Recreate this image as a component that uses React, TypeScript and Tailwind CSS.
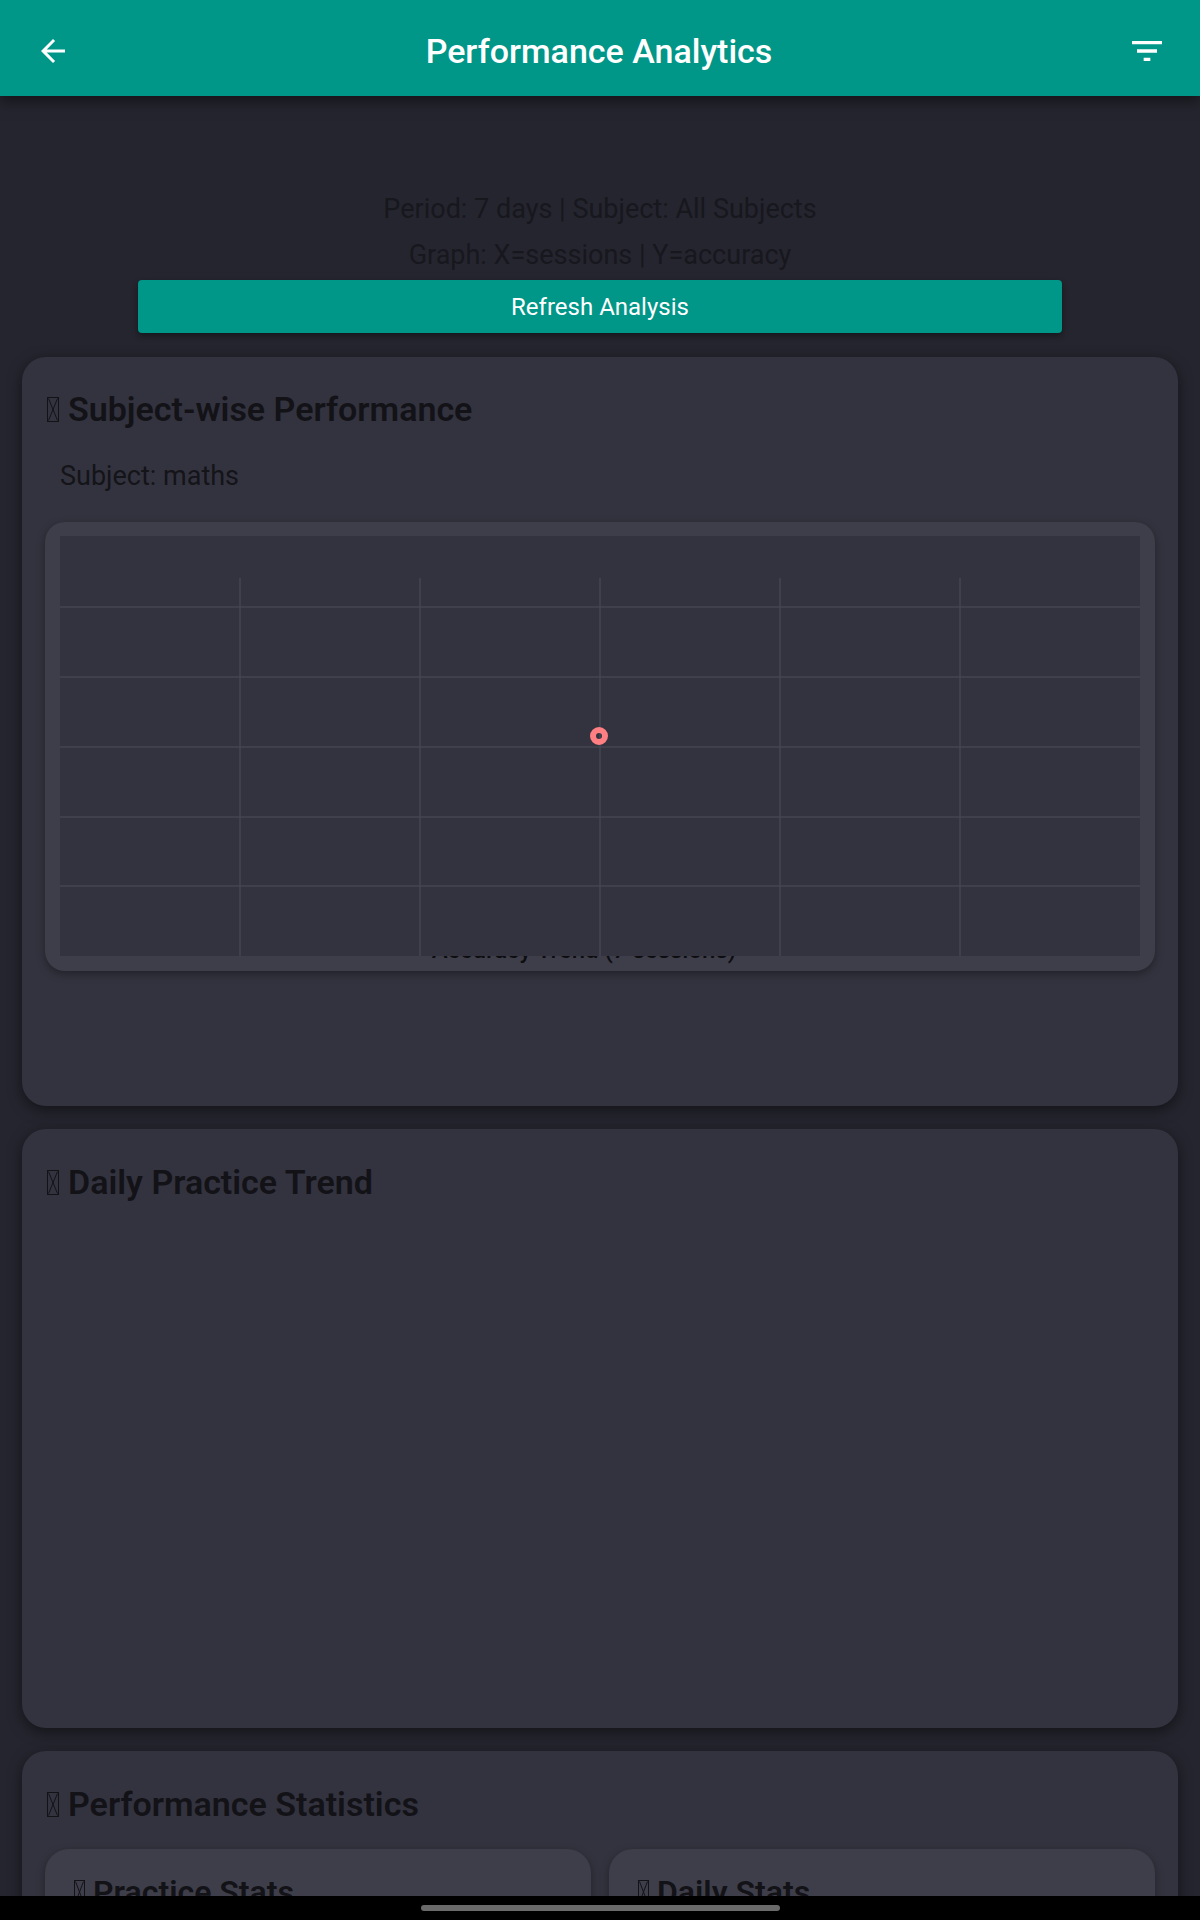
import React from 'react';

const font = { fontFamily: 'Roboto, "Noto Sans", sans-serif' };

function Tofu({ w = 12, h = 25 }: { w?: number; h?: number }) {
  return (
    <svg width={w} height={h} viewBox={`0 0 ${w} ${h}`} className="inline-block shrink-0">
      <rect x="0.5" y="0.5" width={w - 1} height={h - 1} fill="none" stroke="#121217" strokeWidth="1" />
      <line x1="1.5" y1="1.5" x2={w - 1.5} y2={h - 1.5} stroke="#121217" strokeWidth="1" />
      <line x1={w - 1.5} y1="1.5" x2="1.5" y2={h - 1.5} stroke="#121217" strokeWidth="1" />
    </svg>
  );
}

function CardTitle({ children }: { children: React.ReactNode }) {
  return (
    <div className="h-[56px] flex items-center gap-[9px] pl-[2px]">
      <Tofu />
      <span className="text-[34px] font-semibold text-[#121217] leading-none">{children}</span>
    </div>
  );
}

function Chart() {
  const vx = [180, 360, 540, 720, 900];
  const hy = [71, 141, 211, 281, 350];
  return (
    <div className="relative mt-[28px] h-[449px] rounded-[20px] bg-[#3e3e4a] p-[15px] pt-[14px] shadow-[0_3px_8px_rgba(0,0,0,0.35)]">
      <div className="absolute left-0 right-0 top-[413px] text-center text-[24px] font-medium text-[#0d0d10] leading-[30px] pr-[32px]">
        Accuracy Trend (7 sessions)
      </div>
      <div className="relative z-10 h-[420px] bg-[#33333f]">
        <svg width="1080" height="420" viewBox="0 0 1080 420" className="block">
          {vx.map((x) => (
            <line key={x} x1={x} y1={42} x2={x} y2={420} stroke="#464652" strokeWidth="1.5" />
          ))}
          {hy.map((y) => (
            <line key={y} x1={0} y1={y} x2={1080} y2={y} stroke="#464652" strokeWidth="1.5" />
          ))}
          <circle cx="539" cy="200" r="6" fill="none" stroke="#ff7f82" strokeWidth="6" />
        </svg>
      </div>
    </div>
  );
}

export default function App() {
  return (
    <div className="relative h-[1920px] w-[1200px] overflow-hidden bg-[#25252f]" style={font}>
      <header className="relative z-20 h-[96px] bg-[#009688] flex items-center justify-between px-[35px] pt-[6px] shadow-[0_4px_14px_rgba(0,0,0,0.55)]">
        <svg width="36" height="36" viewBox="0 0 24 24" fill="#ffffff">
          <path d="M20 11H7.83l5.59-5.59L12 4l-8 8 8 8 1.41-1.41L7.83 13H20v-2z" />
        </svg>
        <h1 className="text-[34px] font-medium text-white">Performance Analytics</h1>
        <svg width="40" height="40" viewBox="0 0 24 24" fill="#ffffff" className="-mr-[2px]">
          <path d="M10 18h4v-2h-4v2zM3 6v2h18V6H3zm3 7h12v-2H6v2z" />
        </svg>
      </header>

      <main className="pt-[90px] px-[22px]">
        <div className="flex flex-col items-center text-[27px] text-[#17171e]">
          <p className="h-[46px] leading-[46px]">Period: 7 days | Subject: All Subjects</p>
          <p className="h-[46px] leading-[46px]">Graph: X=sessions | Y=accuracy</p>
        </div>
        <button className="mt-[2px] mx-[116px] w-[924px] h-[53px] rounded-[4px] bg-[#009688] text-white text-[24px] shadow-[0_3px_6px_rgba(0,0,0,0.4)]">
          Refresh Analysis
        </button>

        <section className="mt-[24px] h-[749px] rounded-[24px] bg-[#33333f] px-[23px] pt-[24px] shadow-[0_4px_14px_rgba(0,0,0,0.5)]">
          <CardTitle>Subject-wise Performance</CardTitle>
          <p className="mt-[21px] h-[36px] leading-[36px] pl-[15px] text-[27px] text-[#141419]">Subject: maths</p>
          <Chart />
        </section>

        <section className="mt-[23px] h-[599px] rounded-[24px] bg-[#33333f] px-[23px] pt-[25px] shadow-[0_4px_14px_rgba(0,0,0,0.5)]">
          <CardTitle>Daily Practice Trend</CardTitle>
        </section>

        <section className="mt-[23px] h-[400px] rounded-[24px] bg-[#33333f] px-[23px] pt-[25px] shadow-[0_4px_14px_rgba(0,0,0,0.5)]">
          <CardTitle>Performance Statistics</CardTitle>
          <div className="mt-[17px] grid grid-cols-2 gap-[18px]">
            {['Practice Stats', 'Daily Stats'].map((t) => (
              <div key={t} className="h-[300px] rounded-[24px] bg-[#3e3e4a] px-[29px] pt-[21px] shadow-[0_3px_8px_rgba(0,0,0,0.35)]">
                <div className="h-[44px] flex items-center gap-[8px]">
                  <Tofu w={11} h={24} />
                  <span className="text-[32px] font-semibold text-[#121217] leading-none">{t}</span>
                </div>
              </div>
            ))}
          </div>
        </section>
      </main>

      <div className="absolute bottom-0 left-0 right-0 z-30 h-[24px] bg-black flex items-center justify-center">
        <div className="w-[359px] h-[6px] rounded-full bg-[#6a6a6a]" />
      </div>
    </div>
  );
}
